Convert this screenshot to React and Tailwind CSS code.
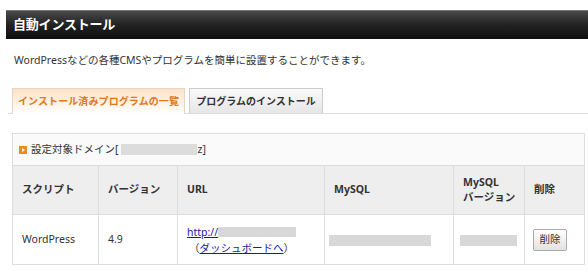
export default function App() {
    const font = {fontFamily: '"Noto Sans", "Noto Sans CJK JP", sans-serif'};

    return (
        <div className="w-[588px] h-[274px] bg-white overflow-hidden text-[#333]" style={font}>
            {/* Title bar */}
            <div className="ml-[6px] mt-[10px] h-[29px] flex items-center pl-[7px] bg-gradient-to-b from-[#4a4a4a] via-[#222] to-[#0e0e0e] border-t border-[#777]">
                <span className="text-white text-[13px] font-bold tracking-[-0.2px]">自動インストール</span>
            </div>

            {/* Description */}
            <p className="ml-[14px] mt-[14px] text-[10.5px] leading-[14px] text-[#333]">
                WordPressなどの各種CMSやプログラムを簡単に設置することができます。
            </p>

            {/* Tabs */}
            <div className="ml-[8px] mt-[21px] flex items-end gap-[4px] border-b border-[#ddd] pl-[4px] h-[26px]">
                <div className="h-[26px] w-[173px] -mb-px flex items-center justify-center border border-b-0 border-[#e3d6c6] bg-gradient-to-b from-[#fde2c4] to-white">
                    <span className="text-[10px] font-bold text-[#e0781c] tracking-[0.1px]">インストール済みプログラムの一覧</span>
                </div>
                <div className="h-[25px] w-[134px] flex items-center justify-center border border-b-0 border-[#ccc] bg-gradient-to-b from-[#fafafa] to-[#e6e6e6]">
                    <span className="text-[10px] font-bold text-[#333]">プログラムのインストール</span>
                </div>
            </div>

            {/* Table */}
            <table className="ml-[12px] mt-[19px] w-[572px] border-collapse text-[10.5px] table-fixed">
                <colgroup>
                    <col className="w-[86px]" />
                    <col className="w-[79px]" />
                    <col className="w-[147px]" />
                    <col className="w-[129px]" />
                    <col className="w-[71px]" />
                    <col className="w-[60px]" />
                </colgroup>
                <tbody>
                    <tr className="h-[32px] bg-[#fafafa]">
                        <td colSpan={6} className="border border-[#ddd] pl-[6px]">
                            <div className="flex items-center">
                                <svg width="8" height="8" viewBox="0 0 8 8" className="mr-[4px]">
                                    <rect width="8" height="8" fill="#f08a1c" />
                                    <path d="M3 2 L6 4 L3 6 Z" fill="#fff" />
                                </svg>
                                <span>設定対象ドメイン[</span>
                                <span className="inline-block w-[76px] h-[11px] bg-[#dcdcdc] ml-[3px]" />
                                <span>z]</span>
                            </div>
                        </td>
                    </tr>
                    <tr className="h-[49px] bg-[#eeeeee] font-bold text-left">
                        <td className="border border-[#ddd] px-[9px]">スクリプト</td>
                        <td className="border border-[#ddd] px-[9px]">バージョン</td>
                        <td className="border border-[#ddd] px-[9px]">URL</td>
                        <td className="border border-[#ddd] px-[9px]">MySQL</td>
                        <td className="border border-[#ddd] pl-[9px] pr-0 leading-[15px] whitespace-nowrap">
                            MySQL
                            <br />
                            バージョン
                        </td>
                        <td className="border border-[#ddd] px-[9px]">削除</td>
                    </tr>
                    <tr className="h-[50px] bg-white">
                        <td className="border border-[#ddd] px-[9px]">WordPress</td>
                        <td className="border border-[#ddd] px-[9px]">4.9</td>
                        <td className="border border-[#ddd] px-[9px] leading-[16px]">
                            <div className="flex items-center">
                                <span className="text-[#1a1aa6] underline">http://</span>
                                <span className="inline-block w-[78px] h-[10px] bg-[#d8d8d8]" />
                            </div>
                            <div className="pl-[2px]">
                                （<span className="text-[#1a1aa6] underline">ダッシュボードへ</span>）
                            </div>
                        </td>
                        <td className="border border-[#ddd] px-[4px]">
                            <div className="w-[102px] h-[11px] bg-[#d8d8d8] mt-[2px]" />
                        </td>
                        <td className="border border-[#ddd] px-[6px]">
                            <div className="w-[57px] h-[11px] bg-[#d8d8d8] mt-[2px]" />
                        </td>
                        <td className="border border-[#ddd] px-[8px]">
                            <button className="w-[34px] h-[22px] border border-[#aaa] rounded-[2px] bg-gradient-to-b from-white to-[#e2e2e2] text-[10.5px] text-[#333]">
                                削除
                            </button>
                        </td>
                    </tr>
                </tbody>
            </table>
        </div>
    );
}
